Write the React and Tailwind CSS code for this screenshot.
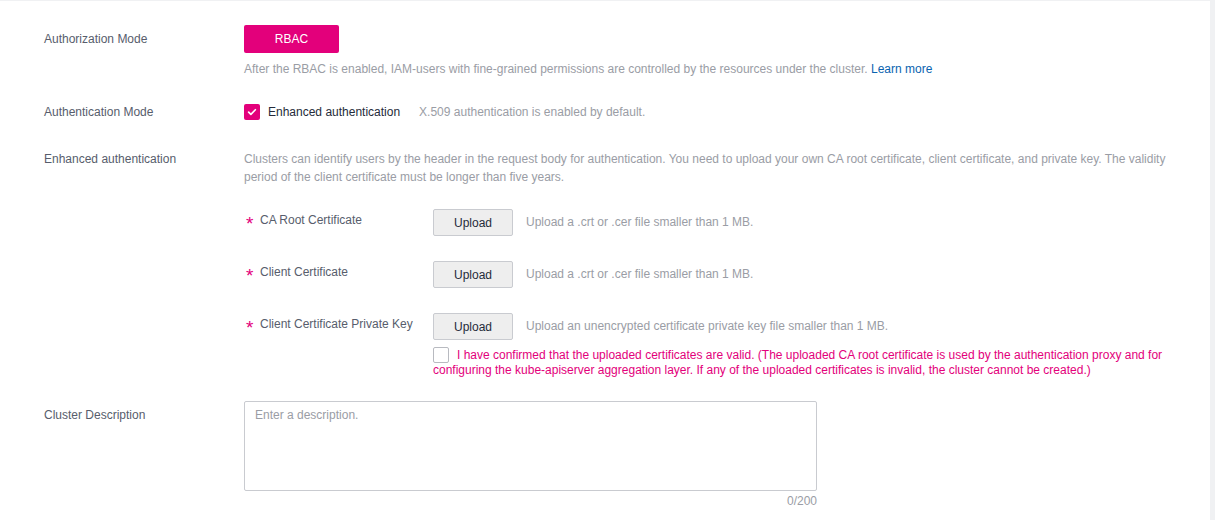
import React from 'react';

const FONT = { fontFamily: '"Liberation Sans", Arial, sans-serif' };

function Check() {
  return (
    <span className="inline-flex h-4 w-4 shrink-0 items-center justify-center rounded-[2px] bg-[#e3007b]">
      <svg viewBox="0 0 16 16" className="h-3 w-3" fill="none" stroke="#fff" strokeWidth="2.2" strokeLinecap="round" strokeLinejoin="round">
        <path d="M3.5 8.2l3 3 6-6.2" />
      </svg>
    </span>
  );
}

function UploadRow({ label, hint }) {
  return (
    <div className="flex items-start">
      <div className="flex w-[189px] pt-[2px] leading-[18px] text-[#575d6c]">
        <span className="w-[16px] pl-[2px] text-[19px] leading-[18px] text-[#e3007b] translate-y-[4px]">*</span>
        <span>{label}</span>
      </div>
      <button className="h-[27px] w-[80px] rounded-[2px] border border-[#c9cbd0] bg-[#eeeeee] text-[12px] text-[#252b3a]">
        Upload
      </button>
      <span className="ml-[13px] leading-[27px] text-[#9a9da5]">{hint}</span>
    </div>
  );
}

export default function App() {
  return (
    <div className="min-h-[520px] bg-[#f0f1f3] pt-px pr-[5px] text-[12px]" style={FONT}>
      <div className="min-h-[519px] bg-white pl-[44px] pt-[24px]">
        {/* Authorization Mode */}
        <div className="flex">
          <div className="w-[200px] leading-[28px] text-[#575d6c]">Authorization Mode</div>
          <div>
            <button className="h-[28px] w-[95px] rounded-[2px] bg-[#e3007b] text-[12px] text-white">RBAC</button>
            <p className="mt-[7px] leading-[18px] text-[#9a9da5]">
              After the RBAC is enabled, IAM-users with fine-grained permissions are controlled by the resources under the cluster.{' '}
              <span className="text-[#0a63b0]">Learn more</span>
            </p>
          </div>
        </div>

        {/* Authentication Mode */}
        <div className="mt-[24px] flex h-[20px] items-center">
          <div className="w-[200px] text-[#575d6c]">Authentication Mode</div>
          <Check />
          <span className="ml-[8px] text-[#252b3a]">Enhanced authentication</span>
          <span className="ml-[19px] text-[#9a9da5]">X.509 authentication is enabled by default.</span>
        </div>

        {/* Enhanced authentication */}
        <div className="mt-[28px] flex">
          <div className="w-[200px] shrink-0 leading-[18px] text-[#575d6c]">Enhanced authentication</div>
          <div className="w-[930px]">
            <p className="leading-[18px] text-[#9a9da5]">
              Clusters can identify users by the header in the request body for authentication. You need to upload your own CA root certificate, client certificate, and private key. The validity period of the client certificate must be longer than five years.
            </p>
            <div className="mt-[23px] flex flex-col gap-[25px]">
              <UploadRow label="CA Root Certificate" hint="Upload a .crt or .cer file smaller than 1 MB." />
              <UploadRow label="Client Certificate" hint="Upload a .crt or .cer file smaller than 1 MB." />
              <UploadRow label="Client Certificate Private Key" hint="Upload an unencrypted certificate private key file smaller than 1 MB." />
            </div>
            <p className="ml-[189px] mt-[7px] w-[740px] leading-[15px] text-[#e3007b]">
              <span className="mr-[8px] inline-block h-4 w-4 rounded-[2px] border border-[#b8bac0] bg-white align-[-4px]" />
              I have confirmed that the uploaded certificates are valid. (The uploaded CA root certificate is used by the authentication proxy and for configuring the kube-apiserver aggregation layer. If any of the uploaded certificates is invalid, the cluster cannot be created.)
            </p>
          </div>
        </div>

        {/* Cluster Description */}
        <div className="mt-[23px] flex">
          <div className="w-[200px] pt-[5px] leading-[18px] text-[#575d6c]">Cluster Description</div>
          <div className="w-[573px]">
            <textarea
              placeholder="Enter a description."
              className="block h-[90px] w-full resize-none rounded-[2px] border border-[#c9cbd0] px-[10px] py-[4px] text-[12px] text-[#252b3a] outline-none placeholder:text-[#9a9da5]"
              style={FONT}
            />
            <div className="mt-[3px] text-right leading-[14px] text-[#9a9da5]">0/200</div>
          </div>
        </div>
      </div>
    </div>
  );
}
